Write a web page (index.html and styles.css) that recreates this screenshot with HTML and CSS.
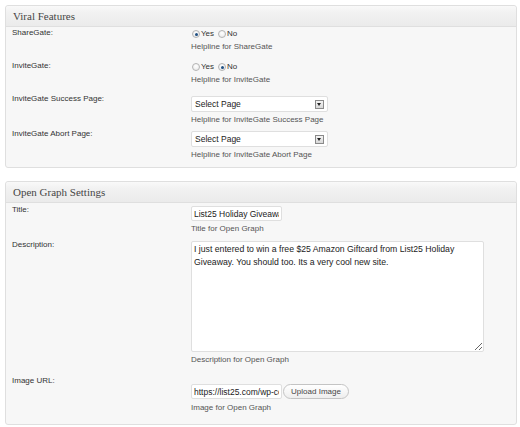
FILE: index.html
```html
<!DOCTYPE html>
<html>
<head>
<meta charset="utf-8">
<link rel="stylesheet" href="styles.css">
</head>
<body>
<div class="box box-first">
  <div class="box-head">Viral Features</div>
  <div class="row row-radio row-top">
    <div class="label">ShareGate:</div>
    <div class="field">
      <div class="radios"><span class="radio checked"></span><span class="opt">Yes</span><span class="radio"></span><span class="opt">No</span></div>
      <div class="help">Helpline for ShareGate</div>
    </div>
  </div>
  <div class="row row-radio">
    <div class="label">InviteGate:</div>
    <div class="field">
      <div class="radios"><span class="radio"></span><span class="opt">Yes</span><span class="radio checked"></span><span class="opt">No</span></div>
      <div class="help">Helpline for InviteGate</div>
    </div>
  </div>
  <div class="row row-select">
    <div class="label">InviteGate Success Page:</div>
    <div class="field">
      <div class="select"><span class="select-text">Select Page</span><span class="select-btn"></span></div>
      <div class="help">Helpline for InviteGate Success Page</div>
    </div>
  </div>
  <div class="row row-select">
    <div class="label">InviteGate Abort Page:</div>
    <div class="field">
      <div class="select"><span class="select-text">Select Page</span><span class="select-btn"></span></div>
      <div class="help">Helpline for InviteGate Abort Page</div>
    </div>
  </div>
</div>

<div class="box box-second">
  <div class="box-head">Open Graph Settings</div>
  <div class="row row-text">
    <div class="label">Title:</div>
    <div class="field">
      <input class="text" type="text" value="List25 Holiday Giveaway">
      <div class="help">Title for Open Graph</div>
    </div>
  </div>
  <div class="row row-text">
    <div class="label">Description:</div>
    <div class="field">
      <textarea class="area">I just entered to win a free $25 Amazon Giftcard from List25 Holiday Giveaway. You should too. Its a very cool new site.</textarea>
      <div class="help">Description for Open Graph</div>
    </div>
  </div>
  <div class="row row-image">
    <div class="label">Image URL:</div>
    <div class="field field-image">
      <div class="upload"><input class="text" type="text" value="https://list25.com/wp-content/uploads/2012/12/list25-logo.png"><span class="button">Upload Image</span></div>
      <div class="help help-image">Image for Open Graph</div>
    </div>
  </div>
</div>
</body>
</html>
```

FILE: styles.css
```css
html, body {
  margin: 0;
  padding: 0;
  background: #ffffff;
}
body {
  padding: 5px 3px 0 5px;
  font-family: "Liberation Sans", Arial, sans-serif;
  font-size: 8px;
  color: #333333;
}
.box {
  border: 1px solid #dfdfdf;
  border-radius: 3px;
  background: #f7f7f7;
}
.box-first {
  padding-bottom: 5px;
}
.box-second {
  margin-top: 13px;
  padding-bottom: 9px;
}
.box-head {
  height: 20px;
  line-height: 21px;
  padding-left: 7px;
  font-family: "Liberation Serif", "Times New Roman", serif;
  font-size: 11px;
  color: #464646;
  background: linear-gradient(to bottom, #f9f9f9 0%, #f2f2f2 30%, #ebebeb 100%);
  border-bottom: 1px solid #dfdfdf;
  border-radius: 3px 3px 0 0;
}
.row {
  display: flex;
  padding: 3px 0 2px;
}
.row-top {
  padding-top: 2px;
}
.row-text {
  padding: 3px 0 4px;
}
.label {
  width: 179px;
  padding-left: 6px;
  line-height: 8px;
  color: #333333;
  flex: none;
}
.field {
  flex: 1;
  display: flex;
  flex-direction: column;
  align-items: flex-start;
}
.help {
  margin-top: 3px;
  line-height: 10px;
  color: #555555;
}
.row-radio .help {
  margin-bottom: 5px;
}
.radios {
  display: flex;
  align-items: center;
  height: 10px;
  line-height: 10px;
}
.radio {
  width: 6px;
  height: 6px;
  border: 1px solid #b4b4b4;
  border-radius: 50%;
  background: radial-gradient(circle at 50% 35%, #ffffff 0%, #e6e6e6 100%);
  margin-left: 1px;
  margin-right: 1px;
  display: flex;
  align-items: center;
  justify-content: center;
}
.radio.checked::after {
  content: "";
  width: 3px;
  height: 3px;
  border-radius: 50%;
  background: #1f4f82;
}
.opt {
  margin-right: 3px;
  color: #333333;
}
.select {
  box-sizing: border-box;
  width: 137px;
  height: 16px;
  border: 1px solid #dfdfdf;
  border-radius: 2px;
  background: #ffffff;
  display: flex;
  align-items: center;
  justify-content: space-between;
  padding: 0 3px 0 3px;
  margin-top: 1px;
}
.select-text {
  color: #222222;
  font-size: 8.5px;
  line-height: 14px;
}
.select-btn {
  width: 7px;
  height: 7px;
  border: 1px solid #8a8a8a;
  background: linear-gradient(to bottom, #f4f4f4, #d8d8d8);
  position: relative;
}
.select-btn::after {
  content: "";
  position: absolute;
  left: 1px;
  top: 2px;
  border-left: 2.5px solid transparent;
  border-right: 2.5px solid transparent;
  border-top: 3px solid #222222;
}
.text {
  box-sizing: border-box;
  width: 91px;
  height: 15px;
  margin: 0;
  padding: 0 2px;
  border: 1px solid #dfdfdf;
  border-radius: 2px;
  background: #ffffff;
  font-family: "Liberation Sans", Arial, sans-serif;
  font-size: 8.5px;
  color: #222222;
  outline: none;
}
.area {
  box-sizing: border-box;
  width: 293px;
  height: 111px;
  margin: 0;
  padding: 1px 2px;
  border: 1px solid #dfdfdf;
  border-radius: 2px;
  background: #ffffff;
  font-family: "Liberation Sans", Arial, sans-serif;
  font-size: 8.7px;
  line-height: 12.5px;
  color: #222222;
  outline: none;
  resize: both;
  display: block;
}
.row-image {
  padding-top: 8px;
}
.field-image {
  padding-top: 7px;
}
.upload {
  display: flex;
  align-items: center;
}
.button {
  box-sizing: border-box;
  height: 15px;
  width: 66px;
  margin-left: 1px;
  border: 1px solid #c4c4c4;
  border-radius: 8px;
  background: linear-gradient(to bottom, #ffffff, #eeeeee);
  color: #464646;
  line-height: 13px;
  text-align: center;
}
.help-image {
  margin-top: 4px;
}
```
